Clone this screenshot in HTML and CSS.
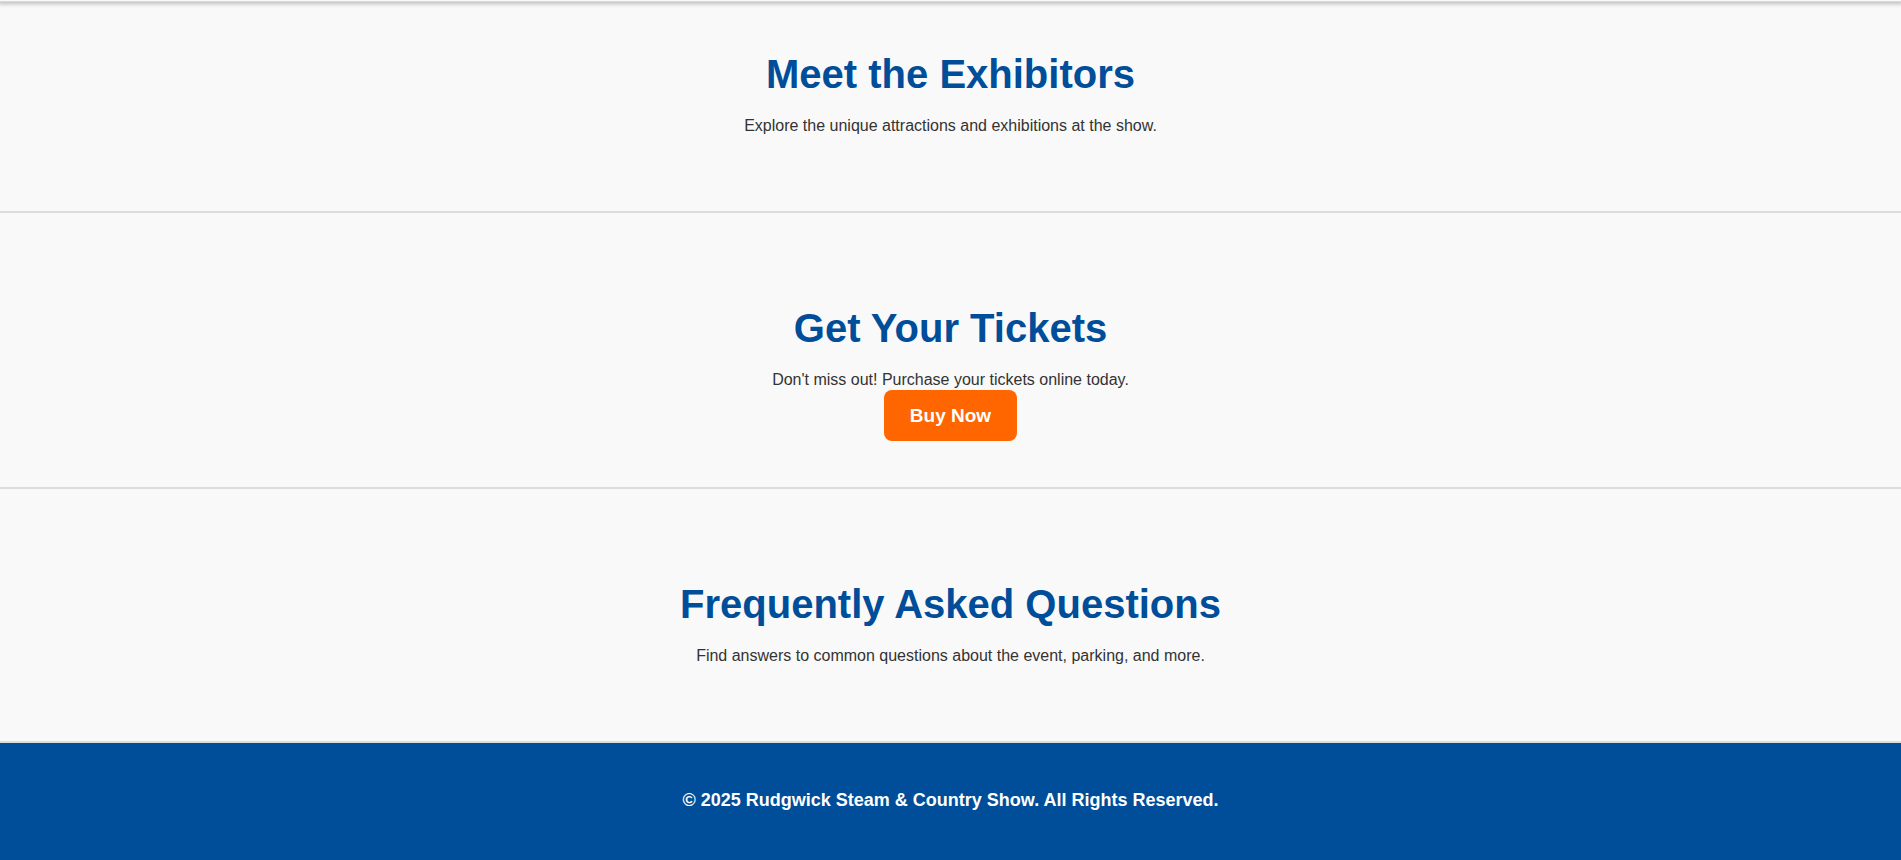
FILE: index.html
```html
<!DOCTYPE html>
<html lang="en">
<head>
<meta charset="utf-8">
<title>Rudgwick Steam &amp; Country Show</title>
<link rel="stylesheet" href="styles.css">
</head>
<body>
<header class="site-edge"></header>
<main>
  <section class="section section-first">
    <h2>Meet the Exhibitors</h2>
    <p>Explore the unique attractions and exhibitions at the show.</p>
  </section>
  <section class="section">
    <h2>Get Your Tickets</h2>
    <p>Don't miss out! Purchase your tickets online today.</p>
    <a class="btn" href="#tickets">Buy Now</a>
  </section>
  <section class="section">
    <h2>Frequently Asked Questions</h2>
    <p>Find answers to common questions about the event, parking, and more.</p>
  </section>
</main>
<footer class="footer">
  <p>© 2025 Rudgwick Steam &amp; Country Show. All Rights Reserved.</p>
</footer>
</body>
</html>
```
FILE: styles.css
```css
body {
  margin: 0;
  font-family: Arial, "Liberation Sans", sans-serif;
  font-size: 16px;
  color: #333;
  background: #f9f9f9;
}
.site-edge {
  height: 1px;
  background: #f9f9f9;
  border-bottom: 1px solid #d6dad8;
  box-shadow: 0 0 4px 2px rgba(0, 0, 0, 0.24);
}
.section {
  padding: 93px 20px 60px;
  text-align: center;
  line-height: 21px;
  border-bottom: 2px solid #ddd;
}
.section-first {
  padding-top: 50px;
}
.section h2 {
  margin: 0 0 20px;
  font-size: 40px;
  line-height: 45px;
  color: #004d99;
}
.section p {
  margin: 0 0 16px;
  line-height: 18px;
}
.btn {
  padding: 15px 26px;
  font-size: 19px;
  font-weight: bold;
  color: #fff;
  text-decoration: none;
  background: #ff6600;
  border-radius: 8px;
}
.footer {
  padding: 47px 20px 50px;
  text-align: center;
  font-size: 18px;
  font-weight: bold;
  line-height: 20px;
  color: #fff;
  background: #004d99;
}
.footer p {
  margin: 0;
}
```
